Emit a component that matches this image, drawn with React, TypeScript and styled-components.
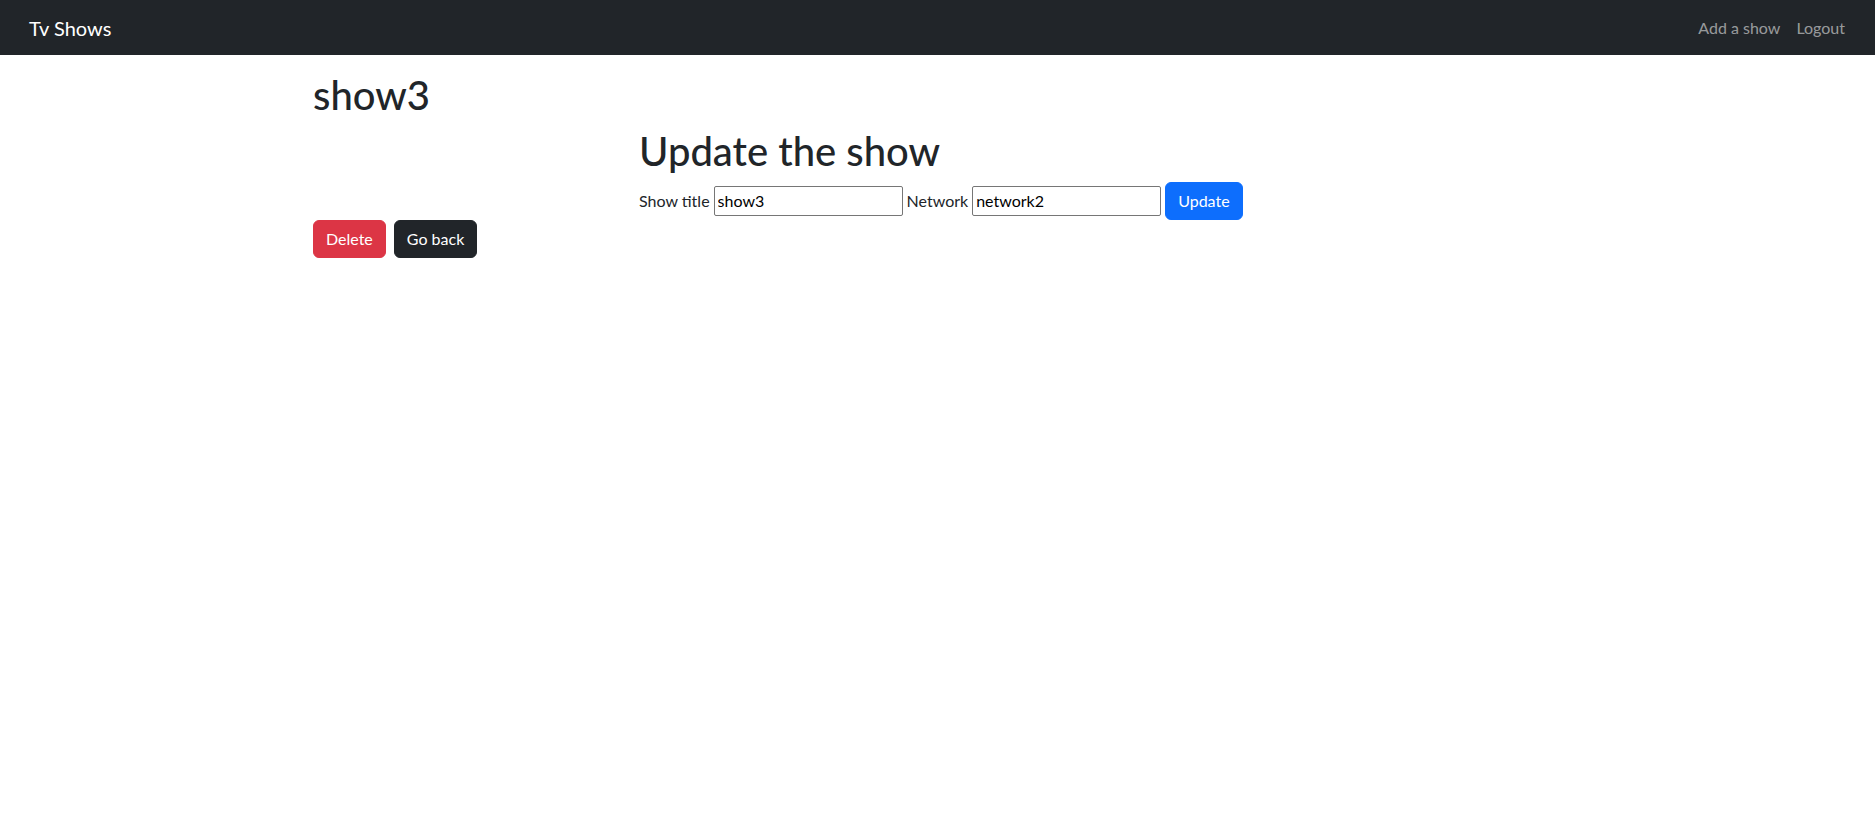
import React from "react";
import styled, { createGlobalStyle } from "styled-components";

const GlobalStyle = createGlobalStyle`
  *, *::before, *::after { box-sizing: border-box; }
  body {
    margin: 0;
    font-family: Lato, "Liberation Sans", sans-serif;
    font-size: 16px;
    line-height: 1.5;
    color: #212529;
    background: #fff;
  }
`;

const Navbar = styled.nav`
  height: 55px;
  background: #212529;
  display: flex;
  align-items: center;
  justify-content: space-between;
  padding: 0 22px 0 29px;
`;

const Brand = styled.a`
  font-size: 20px;
  line-height: 30px;
  color: #fff;
  text-decoration: none;
`;

const NavLinks = styled.div`
  display: flex;
  align-items: center;
`;

const NavLink = styled.a`
  padding: 8px;
  color: rgba(255, 255, 255, 0.55);
  text-decoration: none;
  font-size: 16px;
  line-height: 24px;
`;

const Container = styled.main`
  max-width: 1249px;
  margin: 0 auto;
  padding-top: 16px;
`;

const Heading = styled.h1<{ $gap?: number }>`
  font-size: 40px;
  font-weight: 500;
  line-height: 1.2;
  margin: 0 0 ${(p) => p.$gap ?? 8}px;
`;

const UpdateSection = styled.section`
  padding-left: 326px;
`;

const Form = styled.form`
  display: flex;
  align-items: baseline;
  gap: 4px;
`;

const Label = styled.label`
  font-size: 16px;
`;

const Input = styled.input`
  width: 189px;
  height: 30px;
  padding: 1px 2px 1px 3px;
  border: 1px solid #767676;
  border-radius: 2px;
  font-family: inherit;
  font-size: 16px;
  line-height: 24px;
  color: #000;
  background: #fff;
`;

const Button = styled.button<{ $bg: string }>`
  display: inline-block;
  padding: 6px 12px;
  font-family: inherit;
  font-size: 16px;
  line-height: 24px;
  color: #fff;
  background: ${(p) => p.$bg};
  border: 1px solid ${(p) => p.$bg};
  border-radius: 6px;
  cursor: pointer;
`;

const ButtonRow = styled.div`
  display: flex;
  gap: 8px;
`;

export default function App() {
  return (
    <>
      <GlobalStyle />
      <Navbar>
        <Brand href="#">Tv Shows</Brand>
        <NavLinks>
          <NavLink href="#">Add a show</NavLink>
          <NavLink href="#">Logout</NavLink>
        </NavLinks>
      </Navbar>
      <Container>
        <Heading>show3</Heading>
        <UpdateSection>
          <Heading $gap={7}>Update the show</Heading>
          <Form onSubmit={(e) => e.preventDefault()}>
            <Label htmlFor="title">Show title</Label>
            <Input id="title" defaultValue="show3" />
            <Label htmlFor="network">Network</Label>
            <Input id="network" defaultValue="network2" />
            <Button type="submit" $bg="#0d6efd">Update</Button>
          </Form>
        </UpdateSection>
        <ButtonRow>
          <Button type="button" $bg="#dc3545">Delete</Button>
          <Button type="button" $bg="#212529">Go back</Button>
        </ButtonRow>
      </Container>
    </>
  );
}
